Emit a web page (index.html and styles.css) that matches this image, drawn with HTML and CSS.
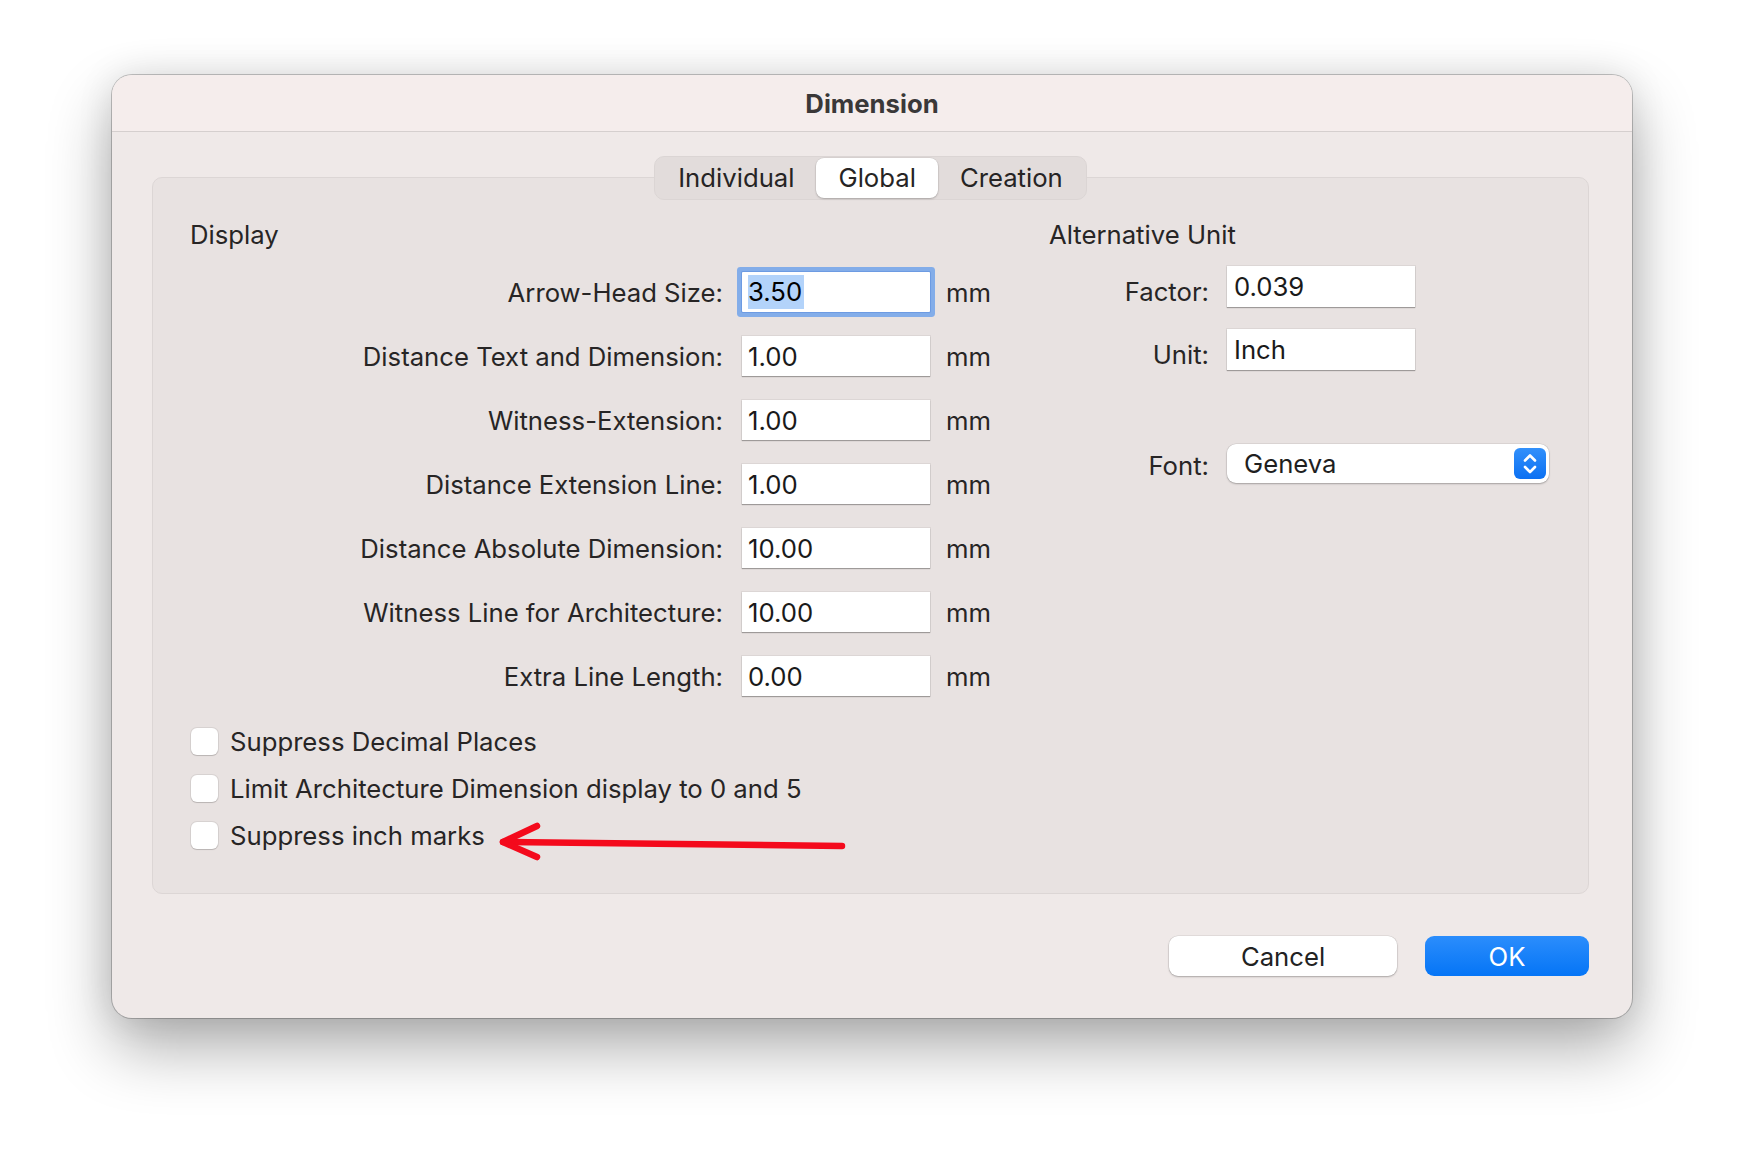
FILE: index.html
```html
<!DOCTYPE html>
<html>
<head>
<meta charset="utf-8">
<title>Dimension</title>
<link rel="stylesheet" href="styles.css">
</head>
<body>
<div class="window">
  <div class="titlebar">Dimension</div>
  <div class="content">
    <div class="tabs">
      <div class="tab">Individual</div>
      <div class="tab sel">Global</div>
      <div class="tab">Creation</div>
    </div>
    <div class="group">
      <div class="cols">
        <div class="left">
          <div class="sec">Display</div>
          <div class="form">
            <div class="lbl">Arrow-Head Size:</div>
            <div class="field focus"><span class="hl">3.50</span></div>
            <div class="unit">mm</div>
            <div class="lbl">Distance Text and Dimension:</div>
            <div class="field">1.00</div>
            <div class="unit">mm</div>
            <div class="lbl">Witness-Extension:</div>
            <div class="field">1.00</div>
            <div class="unit">mm</div>
            <div class="lbl">Distance Extension Line:</div>
            <div class="field">1.00</div>
            <div class="unit">mm</div>
            <div class="lbl">Distance Absolute Dimension:</div>
            <div class="field">10.00</div>
            <div class="unit">mm</div>
            <div class="lbl">Witness Line for Architecture:</div>
            <div class="field">10.00</div>
            <div class="unit">mm</div>
            <div class="lbl">Extra Line Length:</div>
            <div class="field">0.00</div>
            <div class="unit">mm</div>
          </div>
        </div>
        <div class="right">
          <div class="sec">Alternative Unit</div>
          <div class="rform">
            <div class="lbl low">Factor:</div>
            <div class="field rfield">0.039</div>
            <div class="lbl low">Unit:</div>
            <div class="field rfield">Inch</div>
            <div class="lbl fontlbl">Font:</div>
            <div class="popup">
              <span class="popup-text">Geneva</span>
              <span class="stepper">
                <svg width="32" height="31" viewBox="0 0 32 31">
                  <path d="M11 12.5 L16 7.5 L21 12.5" fill="none" stroke="#fff" stroke-width="2.6" stroke-linecap="round" stroke-linejoin="round"/>
                  <path d="M11 19 L16 24 L21 19" fill="none" stroke="#fff" stroke-width="2.6" stroke-linecap="round" stroke-linejoin="round"/>
                </svg>
              </span>
            </div>
          </div>
        </div>
      </div>
      <div class="checks">
        <div class="check"><span class="box"></span><span class="ctext">Suppress Decimal Places</span></div>
        <div class="check"><span class="box"></span><span class="ctext">Limit Architecture Dimension display to 0 and 5</span></div>
        <div class="check"><span class="box"></span><span class="ctext">Suppress inch marks</span></div>
      </div>
      <svg class="arrow" width="360" height="46" viewBox="0 0 360 46">
        <path d="M8 22 L347 26" fill="none" stroke="#f40a1c" stroke-width="6.5" stroke-linecap="round"/>
        <path d="M42 6 L8 22 L42 37" fill="none" stroke="#f40a1c" stroke-width="6.5" stroke-linecap="round" stroke-linejoin="round"/>
      </svg>
    </div>
    <div class="buttons">
      <div class="btn cancel">Cancel</div>
      <div class="btn ok">OK</div>
    </div>
  </div>
</div>
</body>
</html>
```

FILE: styles.css
```css
* { box-sizing: border-box; }

body {
  margin: 0;
  width: 1744px;
  height: 1166px;
  overflow: hidden;
  background: #ffffff;
  font-family: Inter, "Noto Sans", sans-serif;
  font-size: 25.7px;
  color: #272525;
}

.window {
  margin: 75px 0 0 112px;
  width: 1520px;
  border-radius: 20px;
  background: #efe9e8;
  overflow: hidden;
  box-shadow: 0 0 0 1px rgba(0, 0, 0, 0.22), 0 30px 64px rgba(0, 0, 0, 0.32), 0 0 36px rgba(0, 0, 0, 0.10);
}

.titlebar {
  height: 57px;
  background: #f5edec;
  border-bottom: 1px solid #d5cfce;
  display: flex;
  align-items: center;
  justify-content: center;
  font-weight: 700;
  color: #3a3838;
}

.content {
  display: flex;
  flex-direction: column;
  padding: 24px 43px 42px 40px;
}

.tabs {
  align-self: center;
  position: relative;
  z-index: 1;
  display: flex;
  height: 44px;
  padding: 1px;
  background: #e2dcdb;
  border: 1px solid #dbd5d4;
  border-radius: 10px;
}

.tab {
  display: flex;
  align-items: center;
  padding: 0 22px 2px;
  border-radius: 8px;
  color: #262424;
}

.tab.sel {
  background: #ffffff;
  box-shadow: 0 1px 2px rgba(0, 0, 0, 0.22), 0 0 0 0.5px rgba(0, 0, 0, 0.08);
}

.group {
  position: relative;
  margin-top: -23px;
  background: #e8e2e1;
  border: 1px solid #dcd6d5;
  border-radius: 10px;
  padding: 41px 40px 42px 37px;
}

.cols {
  display: grid;
  grid-template-columns: 859px 1fr;
}

.sec {
  height: 32px;
  line-height: 32px;
}

.form {
  margin-top: 21px;
  display: grid;
  grid-template-columns: 533px 188px auto;
  grid-auto-rows: 40px;
  column-gap: 19px;
  row-gap: 24px;
}

.lbl {
  text-align: right;
  align-self: center;
  white-space: nowrap;
}

.lbl.low {
  padding-top: 10px;
}

.unit {
  align-self: center;
  margin-left: -3px;
}

.field {
  background: #ffffff;
  display: flex;
  align-items: center;
  padding-left: 6px;
  color: #1a1a1a;
  box-shadow: 0 0 0 1px rgba(0, 0, 0, 0.05), 0 1px 1px rgba(0, 0, 0, 0.28);
}

.field.focus {
  border-radius: 1px;
  box-shadow: 0 0 0 1px #6d9be2, 0 0 0 5px #83ade9;
}

.hl {
  background: #b3d3fa;
  line-height: 34px;
  padding-right: 2px;
  color: #000;
}

.rform {
  margin-top: 15px;
  display: grid;
  grid-template-columns: 160px auto;
  grid-template-rows: 41px 41px 91px;
  column-gap: 18px;
  row-gap: 22px;
  justify-items: start;
}

.rform .lbl {
  justify-self: end;
}

.rfield {
  width: 188px;
  padding-left: 7px;
}

.fontlbl {
  align-self: end;
  height: 39px;
  line-height: 43px;
}

.popup {
  align-self: end;
  width: 322px;
  height: 39px;
  background: #ffffff;
  border-radius: 9px;
  box-shadow: 0 0 0 0.5px rgba(0, 0, 0, 0.1), 0 1px 2px rgba(0, 0, 0, 0.25);
  display: flex;
  align-items: center;
  justify-content: space-between;
  padding: 0 3px 0 17px;
}

.popup-text {
  color: #1f1f1f;
}

.stepper {
  width: 32px;
  height: 31px;
  border-radius: 6px;
  background: linear-gradient(#3290fb, #0b70f2);
  display: flex;
}

.checks {
  margin-top: 29px;
  display: flex;
  flex-direction: column;
  gap: 15px;
}

.check {
  height: 32px;
  display: flex;
  align-items: center;
}

.box {
  width: 27px;
  height: 27px;
  margin-left: 1px;
  border-radius: 6px;
  background: #ffffff;
  box-shadow: 0 0 0 1px rgba(0, 0, 0, 0.07), 0 1px 1px rgba(0, 0, 0, 0.14);
}

.ctext {
  margin-left: 12px;
}

.arrow {
  position: absolute;
  left: 342px;
  top: 642px;
}

.buttons {
  margin-top: 42px;
  display: flex;
  justify-content: flex-end;
  gap: 28px;
}

.btn {
  height: 40px;
  border-radius: 9px;
  display: flex;
  align-items: center;
  justify-content: center;
}

.cancel {
  width: 228px;
  background: #ffffff;
  color: #222;
  box-shadow: 0 0 0 0.5px rgba(0, 0, 0, 0.1), 0 1px 2px rgba(0, 0, 0, 0.25);
}

.ok {
  width: 164px;
  background: linear-gradient(#2b8dfc, #0575f6);
  color: #ffffff;
}
```
